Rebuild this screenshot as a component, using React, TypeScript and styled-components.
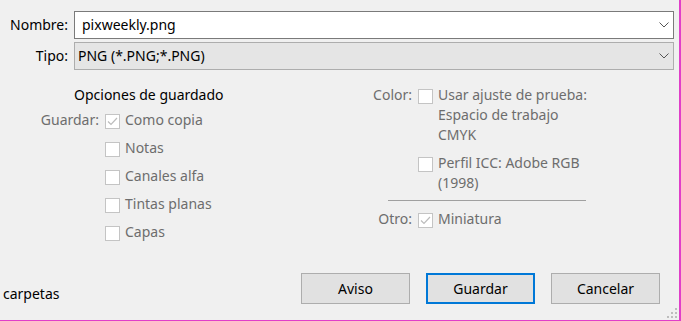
import React from "react";
import styled, { createGlobalStyle } from "styled-components";

const GlobalStyle = createGlobalStyle`
  html, body { margin: 0; padding: 0; background: #f0f0f0; }
  body { font-family: "Noto Sans", "Segoe UI", sans-serif; }
`;

const Dialog = styled.div`
  position: relative;
  box-sizing: border-box;
  width: 681px;
  height: 321px;
  background: #f0f0f0;
  border-right: 2px solid #e03fc9;
  border-bottom: 1px solid #e03fc9;
  padding: 11px 0 16px 0;
  display: flex;
  flex-direction: column;
  font-size: 14px;
  line-height: 20px;
  color: #000;
`;

const FieldGrid = styled.div`
  display: grid;
  grid-template-columns: 68px 1fr;
  column-gap: 6px;
  row-gap: 3px;
  align-items: center;
  padding-right: 5px;
`;

const FieldLabel = styled.div`
  text-align: right;
  color: #000;
`;

const Field = styled.div<{ $variant: "input" | "select" }>`
  box-sizing: border-box;
  height: 28px;
  display: flex;
  align-items: center;
  justify-content: space-between;
  border: 1px solid ${(p) => (p.$variant === "input" ? "#7a7a7a" : "#adadad")};
  background: ${(p) => (p.$variant === "input" ? "#ffffff" : "#e5e5e5")};
  padding: 0 4px 0 ${(p) => (p.$variant === "input" ? 7 : 3)}px;
`;

const Chevron = () => (
  <svg width="10" height="6" viewBox="0 0 10 6">
    <polyline points="0.5,0.5 5,5 9.5,0.5" fill="none" stroke="#555" strokeWidth="1" />
  </svg>
);

const Options = styled.div`
  display: flex;
  margin-top: 15px;
`;

const Section = styled.div<{ $width?: number }>`
  display: flex;
  flex-direction: column;
  width: ${(p) => (p.$width ? `${p.$width}px` : "auto")};
`;

const Heading = styled.div`
  padding-left: 74px;
  margin-bottom: 5px;
  color: #000;
`;

const OptionGrid = styled.div<{ $labelWidth: number }>`
  display: grid;
  grid-template-columns: ${(p) => p.$labelWidth}px 15px auto;
  column-gap: 6px;
  row-gap: 8px;
  align-items: start;
`;

const OptLabel = styled.div`
  grid-column: 1;
  text-align: right;
  color: #6d6d6d;
`;

const OptText = styled.div`
  grid-column: 3;
  margin-left: -1px;
  color: #6d6d6d;
  white-space: nowrap;
`;

const Box = styled.div`
  grid-column: 2;
  box-sizing: border-box;
  width: 15px;
  height: 15px;
  margin-top: 4px;
  border: 1px solid #c4c4c4;
  background: #ffffff;
  display: flex;
  align-items: center;
  justify-content: center;
`;

const Separator = styled.div`
  grid-column: 1 / span 3;
  height: 1px;
  background: #a0a0a0;
  margin: -1px 0 -1px 48px;
  width: 198px;
`;

const Check = ({ checked }: { checked?: boolean }) => (
  <Box>
    {checked && (
      <svg width="11" height="9" viewBox="0 0 11 9">
        <polyline points="1,4.5 4,7.5 10,1" fill="none" stroke="#bcbcbc" strokeWidth="1.2" />
      </svg>
    )}
  </Box>
);

const Footer = styled.div`
  margin-top: auto;
  display: flex;
  align-items: flex-end;
  justify-content: space-between;
  padding-right: 19px;
`;

const FolderText = styled.div`
  padding-left: 3px;
  margin-bottom: 0px;
  color: #000;
`;

const Buttons = styled.div`
  display: flex;
  gap: 16px;
`;

const Button = styled.button<{ $primary?: boolean }>`
  box-sizing: border-box;
  width: 109px;
  height: 31px;
  font-family: inherit;
  font-size: 14px;
  color: #000;
  background: #e1e1e1;
  border: ${(p) => (p.$primary ? "2px solid #0078d7" : "1px solid #adadad")};
  padding: 0;
  margin: 0;
`;

const Grip = styled.svg`
  position: absolute;
  right: 1px;
  bottom: 1px;
`;

export default function App() {
  return (
    <>
      <GlobalStyle />
      <Dialog>
        <FieldGrid>
          <FieldLabel>Nombre:</FieldLabel>
          <Field $variant="input">
            <span>pixweekly.png</span>
            <Chevron />
          </Field>
          <FieldLabel>Tipo:</FieldLabel>
          <Field $variant="select">
            <span>PNG (*.PNG;*.PNG)</span>
            <Chevron />
          </Field>
        </FieldGrid>

        <Options>
          <Section $width={340}>
            <Heading>Opciones de guardado</Heading>
            <OptionGrid $labelWidth={99}>
              <OptLabel>Guardar:</OptLabel>
              <Check checked />
              <OptText>Como copia</OptText>
              <Check />
              <OptText>Notas</OptText>
              <Check />
              <OptText>Canales alfa</OptText>
              <Check />
              <OptText>Tintas planas</OptText>
              <Check />
              <OptText>Capas</OptText>
            </OptionGrid>
          </Section>
          <Section>
            <OptionGrid $labelWidth={72}>
              <OptLabel>Color:</OptLabel>
              <Check />
              <OptText>
                Usar ajuste de prueba:
                <br />
                Espacio de trabajo
                <br />
                CMYK
              </OptText>
              <Check />
              <OptText>
                Perfil ICC: Adobe RGB
                <br />
                (1998)
              </OptText>
              <Separator />
              <OptLabel>Otro:</OptLabel>
              <Check checked />
              <OptText>Miniatura</OptText>
            </OptionGrid>
          </Section>
        </Options>

        <Footer>
          <FolderText>carpetas</FolderText>
          <Buttons>
            <Button>Aviso</Button>
            <Button $primary>Guardar</Button>
            <Button>Cancelar</Button>
          </Buttons>
        </Footer>

        <Grip width="12" height="12" viewBox="0 0 12 12">
          {[
            [9, 1],
            [5, 5],
            [9, 5],
            [1, 9],
            [5, 9],
            [9, 9],
          ].map(([x, y]) => (
            <rect key={`${x}-${y}`} x={x} y={y} width="2" height="2" fill="#bdbdbd" />
          ))}
        </Grip>
      </Dialog>
    </>
  );
}
